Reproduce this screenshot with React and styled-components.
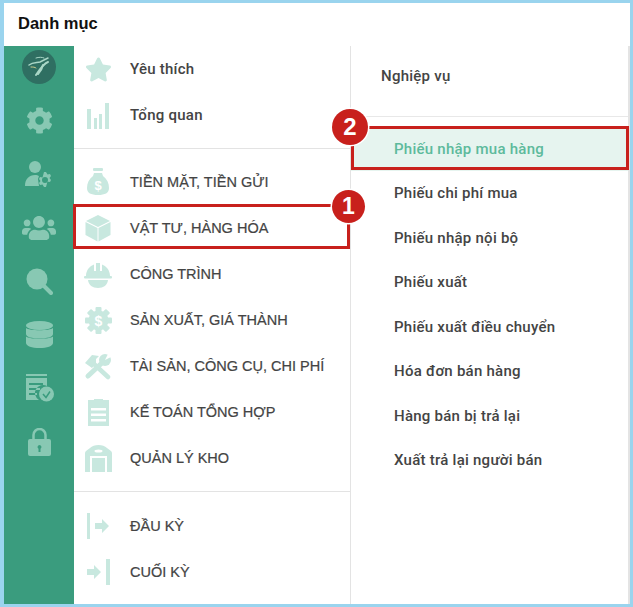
import React from 'react';
import styled, { createGlobalStyle } from 'styled-components';
import { FaStar, FaCog, FaUsers } from 'react-icons/fa';

const GlobalStyle = createGlobalStyle`
  html, body { margin: 0; padding: 0; background: #fff; }
  body { font-family: "Liberation Sans", Arial, sans-serif; }
`;

const Frame = styled.div`
  box-sizing: border-box;
  width: 633px;
  height: 607px;
  display: flex;
  flex-direction: column;
  background: #fff;
  border-style: solid;
  border-color: #9ad4ee;
  border-width: 3px 3px 3px 4px;
  position: relative;
  overflow: hidden;
`;
const Header = styled.div`
  box-sizing: border-box;
  height: 43px;
  flex: none;
  display: flex;
  align-items: center;
  padding: 0 0 2px 14px;
  font-size: 16.500px;
  font-weight: 700;
  color: #111;
`;
const Body = styled.div`
  flex: 1;
  display: flex;
  min-height: 0;
  border-right: 2px solid #e4e4e4;
`;
const Rail = styled.nav`
  width: 70px;
  flex: none;
  background: #3a9c7e;
  display: flex;
  flex-direction: column;
  align-items: center;
  padding-top: 48px;
  position: relative;
`;
const RailIcon = styled.div`
  height: 53.500px;
  display: flex;
  align-items: center;
  justify-content: center;
  color: #88c8b3;
  font-size: 27px;
`;
const Logo = styled.div`
  position: absolute;
  top: 4px;
  left: 18px;
  width: 34px;
  height: 34px;
  border-radius: 50%;
  background: #2f6f62;
`;
const Menu = styled.div`
  width: 276px;
  flex: none;
  border-right: 1px solid #e3e3e3;
`;
const MenuGroup = styled.div`
  padding: ${(p) => p.$pad};
  border-bottom: ${(p) => (p.$last ? 'none' : '1px solid #e3e3e3')};
`;
const MenuRow = styled.div`
  height: 46px;
  display: flex;
  align-items: center;
  position: relative;
  color: #444;
  font-family: ${(p) => (p.$caps ? '"Liberation Sans", Arial, sans-serif' : 'Roboto, Arial, sans-serif')};
  font-size: ${(p) => (p.$caps ? '14.500px' : '15px')};
  font-weight: ${(p) => (p.$caps ? 400 : 500)};
  letter-spacing: ${(p) => (p.$caps ? '0' : '0.25px')};
  -webkit-text-stroke: ${(p) => (p.$caps ? '0.2px #444' : '0')};
`;
const MenuIcon = styled.span`
  width: 48px;
  margin-right: 8px;
  flex: none;
  display: flex;
  align-items: center;
  justify-content: center;
  color: #c8e8df;
  font-size: 27px;
  letter-spacing: 0;
`;
const Callout = styled.div`
  position: absolute;
  border: 3px solid #c8201c;
  box-sizing: border-box;
  pointer-events: none;
`;
const RowCallout = styled(Callout)`
  left: -1px;
  right: 0;
  top: -1px;
  bottom: 2px;
`;
const DetailCallout = styled(Callout)`
  inset: 0 -1px 1px 0;
`;
const Badge = styled.span`
  position: absolute;
  border-radius: 50%;
  background: #c8201c;
  box-shadow: 0 0 0 1.500px #fff;
  color: #fff;
  font-family: "Liberation Sans", Arial, sans-serif;
  font-weight: 700;
  letter-spacing: 0;
  display: flex;
  align-items: center;
  justify-content: center;
  -webkit-text-stroke: 0;
  z-index: 2;
`;
const RowBadge = styled(Badge)`
  width: 33px;
  height: 33px;
  font-size: 23px;
  right: -15px;
  top: -15px;
`;
const DetailBadge = styled(Badge)`
  width: 36px;
  height: 36px;
  font-size: 24px;
  left: -19px;
  top: -17px;
`;
const Detail = styled.div`
  flex: 1;
  min-width: 0;
  font-family: Roboto, Arial, sans-serif;
  font-size: 15px;
  font-weight: 500;
  letter-spacing: 0.25px;
`;
const DetailTitle = styled.div`
  height: 71px;
  box-sizing: border-box;
  padding: 22px 0 0 30px;
  line-height: 16px;
  color: #444;
  border-bottom: 1px solid #e8e8e8;
`;
const DetailList = styled.div`
  padding-top: 9px;
`;
const DetailRow = styled.div`
  box-sizing: border-box;
  height: 44.500px;
  display: flex;
  align-items: center;
  padding: 1px 0 0 43px;
  position: relative;
  color: ${(p) => (p.$active ? '#5dba9c' : '#444')};
  background: ${(p) => (p.$active ? '#e6f4ef' : 'transparent')};
`;

const Bars = () => (
  <svg width="24" height="27" viewBox="0 0 24 27" fill="currentColor">
    <rect x="1" y="7" width="4" height="20" />
    <rect x="8" y="16" width="3" height="11" />
    <rect x="13" y="12" width="3" height="15" />
    <rect x="19" y="1" width="4" height="26" />
  </svg>
);
const MoneyBag = () => (
  <svg width="24" height="28" viewBox="0 0 24 28">
    <rect x="7" y="0" width="10" height="3" rx="1" fill="currentColor" />
    <path d="M8 5h8l1 3c4 3 6 7 6 12 0 5-4 7-11 7S1 25 1 20c0-5 2-9 6-12z" fill="currentColor" />
    <text x="12" y="22" textAnchor="middle" fontSize="13" fontWeight="700" fill="#fff" fontFamily="Liberation Sans">$</text>
  </svg>
);
const Cube = () => (
  <svg width="26" height="28" viewBox="0 0 26 28" fill="currentColor">
    <path d="M13 1 25 7 13 13 1 7z" />
    <path d="M.500 8 12.500 14V27.500L.500 21z" />
    <path d="M25.500 8 13.500 14V27.500l12-6.500z" />
  </svg>
);
const HardHat = () => (
  <svg width="28" height="28" viewBox="0 0 28 28" fill="currentColor">
    <path d="M2 16C2 10 6 6 10 4.500V11h2V3h4v8h2V4.500C22 6 26 10 26 16z" />
    <rect x="0" y="16" width="28" height="2.500" rx="1" />
    <path d="M4 20h20c-.500 5-4.500 8-10 8s-9.500-3-10-8z" />
  </svg>
);
const GearDollar = () => (
  <svg width="27" height="27" viewBox="0 0 27 27" fill="currentColor">
    <circle cx="13.500" cy="13.500" r="10" />
    {[0, 45, 90, 135, 180, 225, 270, 315].map((angle) => (
      <rect key={angle} x="10.500" y="0" width="6" height="6" rx="1" transform={`rotate(${angle} 13.500 13.500)`} />
    ))}
    <text x="13.500" y="18.500" textAnchor="middle" fontSize="14" fontWeight="700" fill="#fff" fontFamily="Liberation Sans">$</text>
  </svg>
);
const Tools = () => (
  <svg width="28" height="27" viewBox="0 0 28 27" fill="currentColor" stroke="currentColor">
    <path d="M1 10 8 2l7 1-3 3 0 4-4 5z" strokeWidth="0" />
    <path d="M10 11 24 24" strokeWidth="4.500" strokeLinecap="round" />
    <path d="M4 23 20 8" strokeWidth="5" strokeLinecap="round" />
    <circle cx="21" cy="7" r="6" strokeWidth="0" />
    <path d="M21 7 25-1l4 4z" fill="#fff" strokeWidth="0" />
  </svg>
);
const Clipboard = () => (
  <svg width="23" height="28" viewBox="0 0 23 28" fill="currentColor">
    <path d="M1 2h6V1h9v1h6v26H1zM4 10v2.500h15V10zm0 5.500v2.500h15v-2.500zm0 5.500v2.500h15V21z" fillRule="evenodd" />
  </svg>
);
const Warehouse = () => (
  <svg width="27" height="27" viewBox="0 0 27 27">
    <path d="M13.500 0C17 0 20 1 22 3l4 3c1 1 1 2 1 3v18H0V9c0-1 0-2 1-3l4-3C7 1 10 0 13.500 0z" fill="currentColor" />
    <ellipse cx="13.500" cy="6" rx="4" ry="1.500" fill="#fff" />
    <rect x="5" y="11" width="17" height="16" fill="#fff" />
    <rect x="7" y="13" width="13" height="14" fill="currentColor" />
  </svg>
);
const ArrowIn = () => (
  <svg width="24" height="28" viewBox="0 0 24 28" fill="currentColor">
    <rect x="1" y="1" width="3" height="26" />
    <path d="M9 11h7V7l7 7-7 7v-4H9z" />
  </svg>
);
const ArrowOut = () => (
  <svg width="24" height="28" viewBox="0 0 24 28" fill="currentColor">
    <rect x="20" y="1" width="4" height="26" />
    <path d="M1 11h7V7l7 7-7 7v-4H1z" />
  </svg>
);
const UserCog = () => (
  <svg width="28" height="27" viewBox="0 0 28 27" fill="currentColor">
    <circle cx="10" cy="6" r="6" />
    <path d="M0 25c0-7 4-11 10-11 2 0 3 .500 4 1l-1 3 1 7z" />
    <path d="M21 11l1.500 2.500 2.500-.500 1 2-1.500 2 1.500 2-1 2-2.500-.500L21 26h-2l-1.500-2.500-2.500.500-1-2 1.500-2-1.500-2 1-2 2.500.500L19 11zm-1 5a3 3 0 1 0 0 6 3 3 0 0 0 0-6z" fillRule="evenodd" />
  </svg>
);
const Lens = () => (
  <svg width="27" height="27" viewBox="0 0 27 27" fill="currentColor" stroke="currentColor">
    <circle cx="11" cy="11" r="10.500" strokeWidth="0" />
    <path d="M18 18 25 25" strokeWidth="4" strokeLinecap="round" />
  </svg>
);
const Database = () => (
  <svg width="27" height="27" viewBox="0 0 27 27" fill="currentColor">
    <ellipse cx="13.500" cy="4.500" rx="13.500" ry="4.500" />
    <path d="M0 7c3 3 24 3 27 0v6c0 3-6 4.500-13.500 4.500S0 16 0 13z" />
    <path d="M0 15.500c3 3 24 3 27 0V22c0 3-6 5-13.500 5S0 25 0 22z" />
  </svg>
);
const FileCheck = () => (
  <svg width="29" height="28" viewBox="0 0 29 28" fill="currentColor">
    <path d="M1 0h21v2H1zM1 4h21v8a8 8 0 0 0-8 14H1zm3 5v2h14V9zm0 5v2h11v-2zm0 5v2h8v-2z" fillRule="evenodd" />
    <circle cx="21.500" cy="20" r="7.500" />
    <path d="m18 20 3 3.500 4-6" fill="none" stroke="#3a9c7e" strokeWidth="1.500" />
  </svg>
);
const Padlock = () => (
  <svg width="23" height="28" viewBox="0 0 23 28" fill="currentColor">
    <path d="M5.500 12V7a6 6 0 0 1 12 0v5" fill="none" stroke="currentColor" strokeWidth="2.500" />
    <path d="M2 11h19a2 2 0 0 1 2 2v13a2 2 0 0 1-2 2H2a2 2 0 0 1-2-2V13a2 2 0 0 1 2-2zm9.500 6a2 2 0 0 0-1 3.700V24h2v-3.300a2 2 0 0 0-1-3.700z" fillRule="evenodd" />
  </svg>
);
const LogoMark = () => (
  <svg width="34" height="34" viewBox="0 0 34 34" fill="none" stroke="#a9d6c6" strokeLinecap="round">
    <path d="M7 15c4-3 8-2 11-3l8-4" strokeWidth="1.500" />
    <path d="M14 8c3-1 6-1 8 0" strokeWidth="1" />
    <path d="M26 12c-4 1-8 7-12 13" strokeWidth="2" />
    <path d="M21 15c-1 4-3 7-5 9" strokeWidth="2" />
    <path d="M9 17c2 0 4 0 5 1" stroke="#cfcf8f" strokeWidth="1" />
  </svg>
);

const railItems = [
  <FaCog />,
  <UserCog />,
  <FaUsers size={34} />,
  <Lens />,
  <Database />,
  <FileCheck />,
  <Padlock />,
];

const topItems = [
  { label: 'Yêu thích', icon: <FaStar /> },
  { label: 'Tổng quan', icon: <Bars /> },
];
const mainItems = [
  { label: 'TIỀN MẶT, TIỀN GỬI', icon: <MoneyBag />, caps: true },
  { label: 'VẬT TƯ, HÀNG HÓA', icon: <Cube />, caps: true, active: true },
  { label: 'CÔNG TRÌNH', icon: <HardHat />, caps: true },
  { label: 'SẢN XUẤT, GIÁ THÀNH', icon: <GearDollar />, caps: true },
  { label: 'TÀI SẢN, CÔNG CỤ, CHI PHÍ', icon: <Tools />, caps: true },
  { label: 'KẾ TOÁN TỔNG HỢP', icon: <Clipboard />, caps: true },
  { label: 'QUẢN LÝ KHO', icon: <Warehouse />, caps: true },
];
const bottomItems = [
  { label: 'ĐẦU KỲ', icon: <ArrowIn />, caps: true },
  { label: 'CUỐI KỲ', icon: <ArrowOut />, caps: true },
];
const detailItems = [
  'Phiếu nhập mua hàng',
  'Phiếu chi phí mua',
  'Phiếu nhập nội bộ',
  'Phiếu xuất',
  'Phiếu xuất điều chuyển',
  'Hóa đơn bán hàng',
  'Hàng bán bị trả lại',
  'Xuất trả lại người bán',
];

function Rows({ items }) {
  return items.map((item) => (
    <MenuRow key={item.label} $caps={item.caps}>
      <MenuIcon>{item.icon}</MenuIcon>
      {item.label}
      {item.active && (
        <>
          <RowCallout />
          <RowBadge>1</RowBadge>
        </>
      )}
    </MenuRow>
  ));
}

export default function App() {
  return (
    <Frame>
      <GlobalStyle />
      <Header>Danh mục</Header>
      <Body>
        <Rail>
          <Logo><LogoMark /></Logo>
          {railItems.map((icon, i) => (
            <RailIcon key={i}>{icon}</RailIcon>
          ))}
        </Rail>
        <Menu>
          <MenuGroup $pad="0 0 10px">
            <Rows items={topItems} />
          </MenuGroup>
          <MenuGroup $pad="10px 0">
            <Rows items={mainItems} />
          </MenuGroup>
          <MenuGroup $pad="11px 0 0" $last>
            <Rows items={bottomItems} />
          </MenuGroup>
        </Menu>
        <Detail>
          <DetailTitle>Nghiệp vụ</DetailTitle>
          <DetailList>
            {detailItems.map((label, i) => (
              <DetailRow key={label} $active={i === 0}>
                {label}
                {i === 0 && (
                  <>
                    <DetailCallout />
                    <DetailBadge>2</DetailBadge>
                  </>
                )}
              </DetailRow>
            ))}
          </DetailList>
        </Detail>
      </Body>
    </Frame>
  );
}
